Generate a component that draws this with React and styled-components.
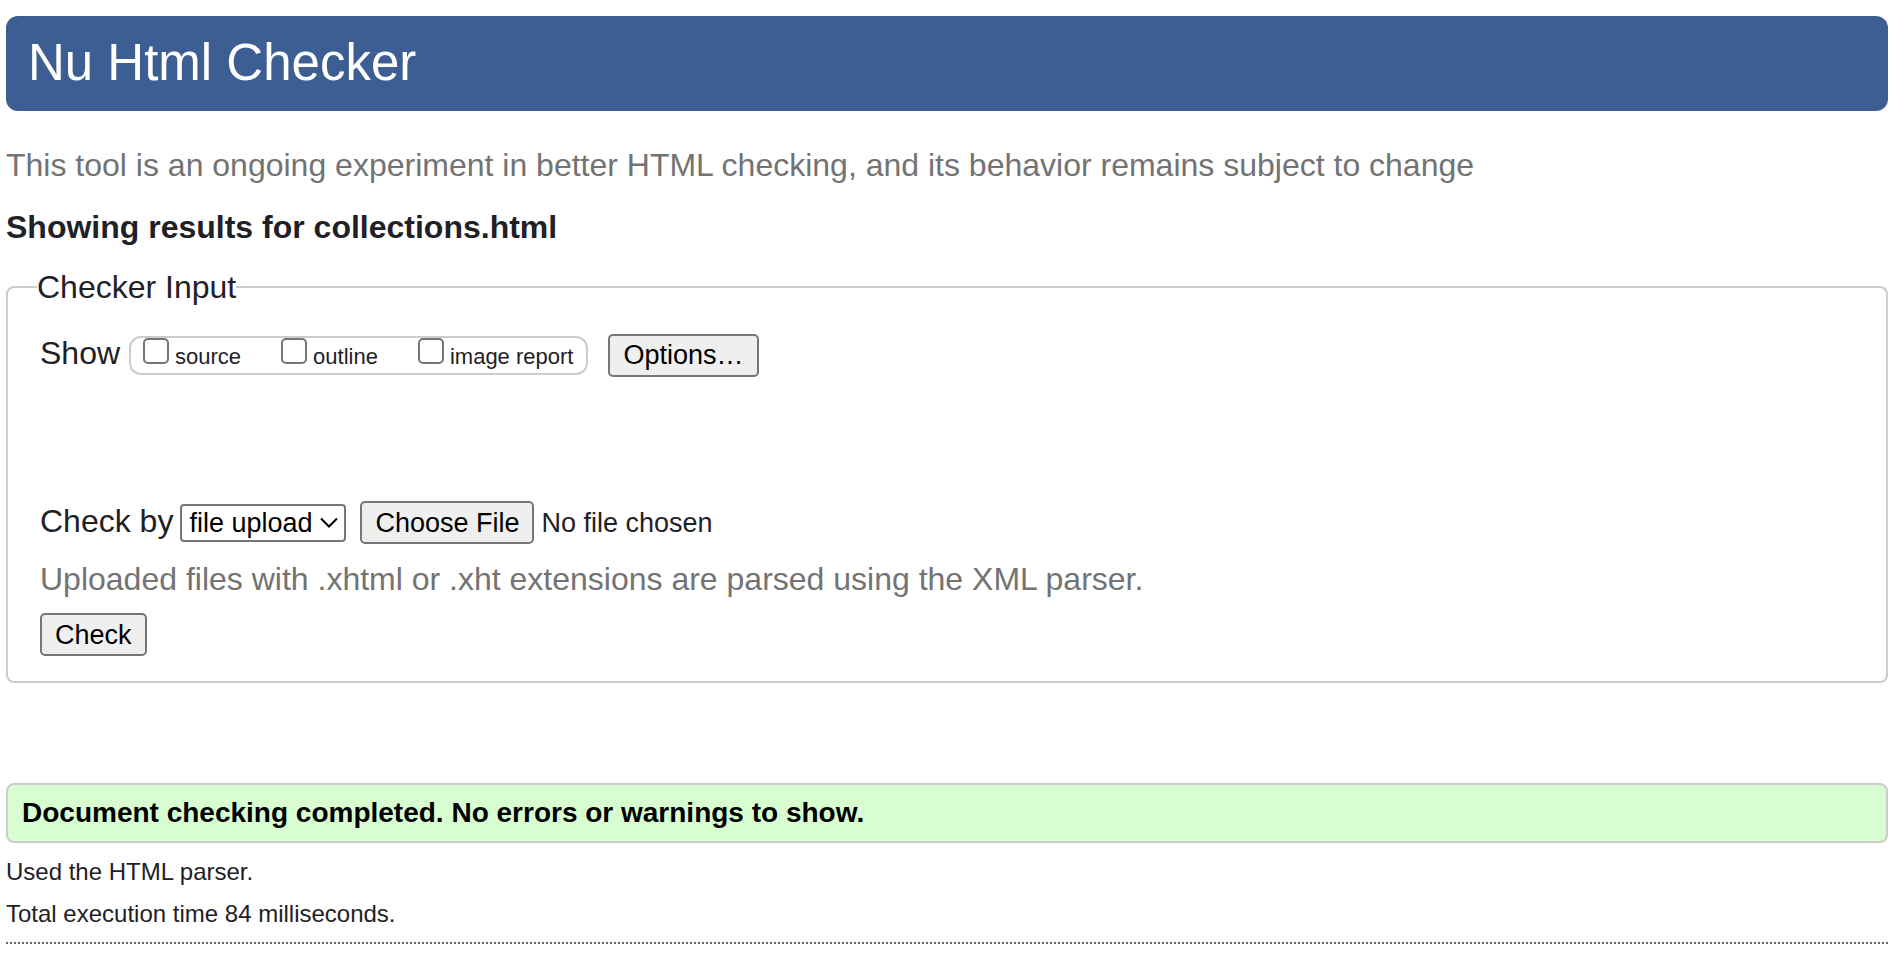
import React, { useState } from "react";
import styled, { createGlobalStyle } from "styled-components";

const GlobalStyle = createGlobalStyle`
  *, *::before, *::after { box-sizing: border-box; }
  body {
    margin: 0;
    background: #fff;
    color: #1f2126;
    font-family: "Liberation Sans", Arial, Helvetica, sans-serif;
    font-size: 32px;
    line-height: 40px;
  }
`;

const Page = styled.div`
  padding: 16px 16px 16px 6px;
`;

const Banner = styled.header`
  padding: 17px 22px 18px;
  border-radius: 12px;
  background: #3d5e93;
  color: #fff;
`;

const Title = styled.h1`
  margin: 0;
  font-size: 51px;
  line-height: 60px;
  font-weight: 400;
`;

const Note = styled.p`
  margin: ${(p) => p.$top}px 0 ${(p) => p.$bottom || 0}px;
  color: #737373;
`;

const Heading = styled.h2`
  margin: 22px 0 19px;
  font-size: 32px;
  line-height: 40px;
  font-weight: 700;
`;

const InputSet = styled.fieldset`
  min-width: 0;
  margin: 0;
  padding: 25px 32px 25px;
  border: 2px solid #ccc;
  border-radius: 8px;
`;

const Legend = styled.legend`
  margin-left: -3px;
  padding: 0;
  line-height: 42px;
`;

const Row = styled.div`
  display: flex;
  flex-wrap: wrap;
  align-items: baseline;
  margin-bottom: ${(p) => p.$bottom || 0}px;
`;

const ShowGroup = styled.div`
  display: flex;
  flex-wrap: wrap;
  gap: 0 40px;
  margin: 0 20px 0 9px;
  padding: 0 13px 4px 12px;
  border: 2px solid #ccc;
  border-radius: 12px;
`;

const Option = styled.label`
  display: flex;
  align-items: baseline;
  gap: 6px;
  font-size: 22px;
  line-height: 24px;
`;

const Checkbox = styled.input`
  appearance: none;
  width: 26px;
  height: 26px;
  margin: 0;
  border: 2px solid #767676;
  border-radius: 5px;
  background: #fff;

  &:checked {
    background: #0075ff;
    border-color: #0075ff;
  }
`;

const buttonLook = `
  height: 43px;
  padding: 0 13px;
  border: 2px solid #767676;
  border-radius: 5px;
  background: #efefef;
  color: #000;
  font-family: inherit;
  font-size: 27px;
  line-height: 38px;
`;

const Button = styled.button`
  ${buttonLook}
`;

const SelectBox = styled.span`
  display: inline-grid;
  align-items: baseline;
  margin: 0 14px 0 7px;

  & > * { grid-area: 1 / 1; }
`;

const Select = styled.select`
  appearance: none;
  height: 38px;
  padding: 0 31px 0 7px;
  border: 2px solid #767676;
  border-radius: 4px;
  background: #fff;
  color: #000;
  font-family: inherit;
  font-size: 27px;
  line-height: 34px;
`;

const Chevron = styled.svg`
  align-self: center;
  justify-self: end;
  margin-right: 8px;
  pointer-events: none;
`;

const FileInput = styled.input`
  width: 400px;
  max-width: 100%;
  color: #1f2126;
  font-family: inherit;
  font-size: 27px;
  line-height: 38px;

  &::file-selector-button {
    ${buttonLook}
    margin: 0 7px 0 0;
  }
`;

const Success = styled.p`
  margin: 100px 0 13px;
  padding: 10px 14px;
  border: 2px solid #ccc;
  border-radius: 8px;
  background: #d7fdd0;
  color: #000;
  font-size: 28px;
  line-height: 36px;
  font-weight: 700;
`;

const Detail = styled.p`
  margin: 0 0 10px;
  font-size: 24px;
  line-height: 32px;
`;

const Rule = styled.hr`
  margin: 12px 0 0;
  border: 0;
  border-top: 2px dotted #666;
`;

const SHOW_OPTIONS = ["source", "outline", "image report"];

export default function App() {
  const [method, setMethod] = useState("file");

  return (
    <>
      <GlobalStyle />
      <Page>
        <Banner>
          <Title>Nu Html Checker</Title>
        </Banner>
        <main>
          <Note $top={34}>
            This tool is an ongoing experiment in better HTML checking, and its behavior remains
            subject to change
          </Note>
          <Heading>Showing results for collections.html</Heading>
          <form onSubmit={(e) => e.preventDefault()}>
            <InputSet>
              <Legend>Checker Input</Legend>
              <Row $bottom={124}>
                <span id="show-label">Show</span>
                <ShowGroup role="group" aria-labelledby="show-label">
                  {SHOW_OPTIONS.map((name) => (
                    <Option key={name}>
                      <Checkbox type="checkbox" name={name} />
                      {name}
                    </Option>
                  ))}
                </ShowGroup>
                <Button type="button">Options…</Button>
              </Row>
              <Row>
                <label htmlFor="method">Check by</label>
                <SelectBox>
                  <Select id="method" value={method} onChange={(e) => setMethod(e.target.value)}>
                    <option value="file">file upload</option>
                    <option value="url">address</option>
                    <option value="text">text input</option>
                  </Select>
                  <Chevron width="18" height="12" viewBox="0 0 18 12" fill="none" aria-hidden="true">
                    <path d="M1 1.5 L9 9.5 L17 1.5" stroke="#000" strokeWidth="2" />
                  </Chevron>
                </SelectBox>
                <FileInput type="file" aria-label="File to check" />
              </Row>
              <Note $top={15} $bottom={14}>
                Uploaded files with .xhtml or .xht extensions are parsed using the XML parser.
              </Note>
              <Row>
                <Button type="submit">Check</Button>
              </Row>
            </InputSet>
          </form>
          <Success>Document checking completed. No errors or warnings to show.</Success>
          <Detail>Used the HTML parser.</Detail>
          <Detail>Total execution time 84 milliseconds.</Detail>
          <Rule />
        </main>
      </Page>
    </>
  );
}
